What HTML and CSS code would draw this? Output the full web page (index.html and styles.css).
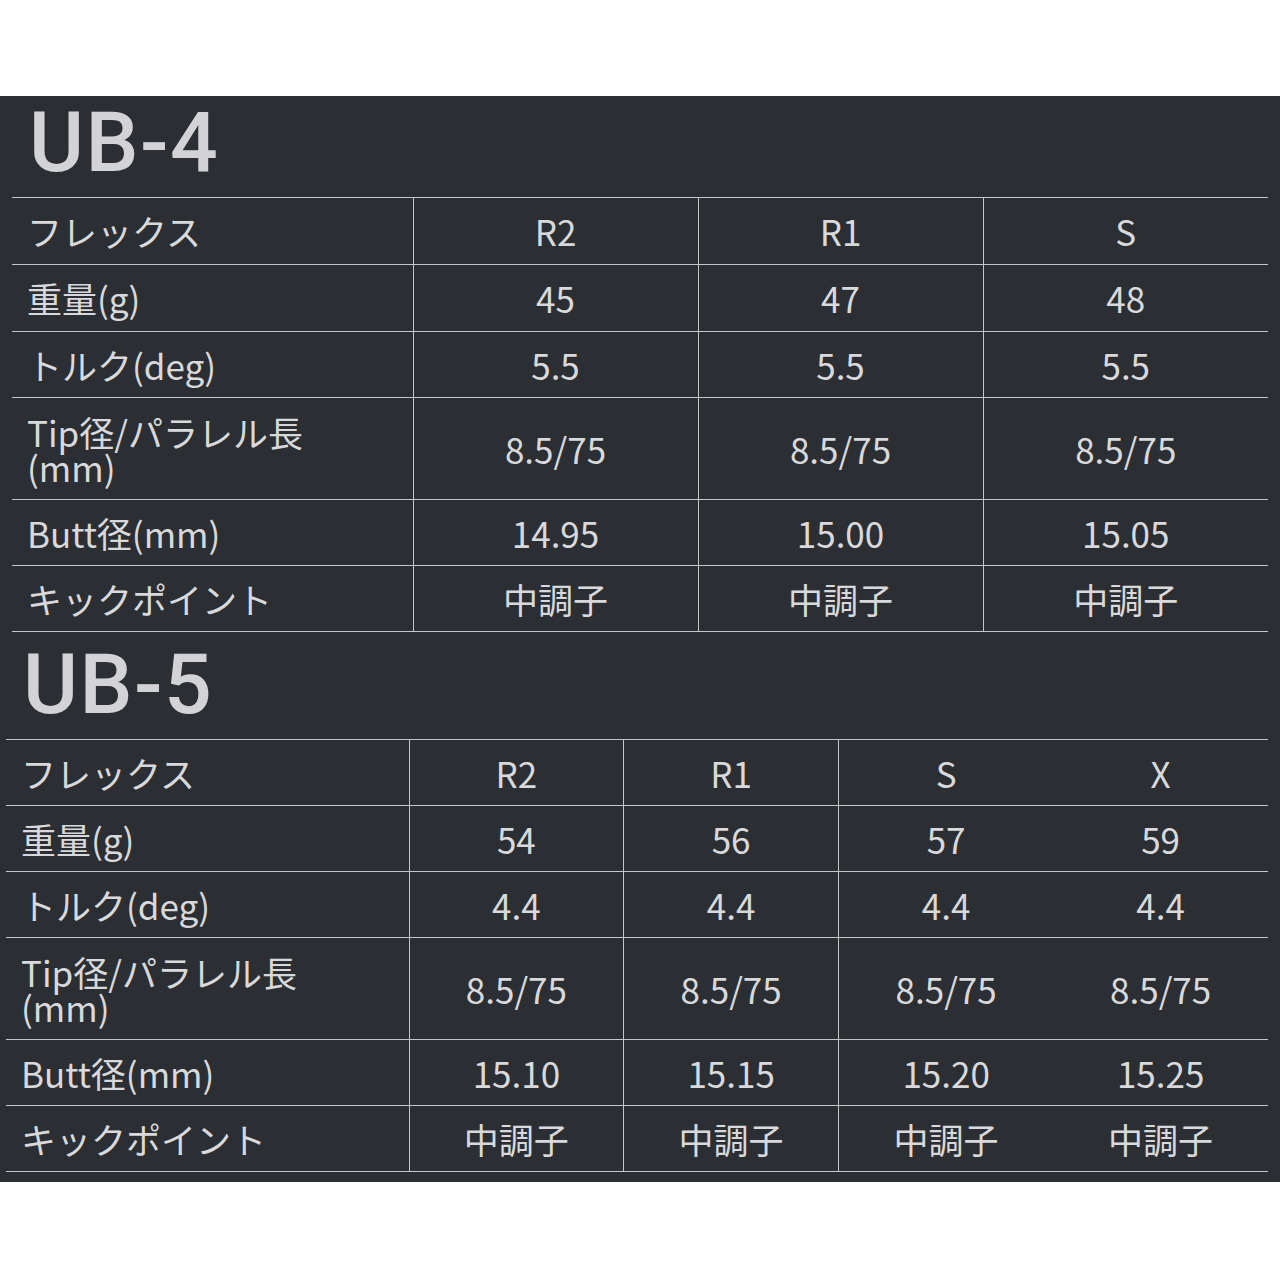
FILE: index.html
```html
<!DOCTYPE html>
<html lang="ja">
<head>
<meta charset="utf-8">
<link rel="stylesheet" href="styles.css">
</head>
<body>
<div class="top-space"></div>
<section class="panel">
  <h2 class="model model-4">UB-4</h2>
  <table class="spec spec-4">
    <colgroup><col class="c-label4"><col><col><col></colgroup>
    <tr class="r67"><th>フレックス</th><td>R2</td><td>R1</td><td>S</td></tr>
    <tr class="r67"><th>重量(g)</th><td>45</td><td>47</td><td>48</td></tr>
    <tr><th>トルク(deg)</th><td>5.5</td><td>5.5</td><td>5.5</td></tr>
    <tr class="tall"><th>Tip径/パラレル長<br>(mm)</th><td>8.5/75</td><td>8.5/75</td><td>8.5/75</td></tr>
    <tr><th>Butt径(mm)</th><td>14.95</td><td>15.00</td><td>15.05</td></tr>
    <tr><th>キックポイント</th><td>中調子</td><td>中調子</td><td>中調子</td></tr>
  </table>
  <h2 class="model model-5">UB-5</h2>
  <table class="spec spec-5">
    <colgroup><col class="c-label5"><col><col><col><col></colgroup>
    <tr><th>フレックス</th><td>R2</td><td>R1</td><td>S</td><td class="nb">X</td></tr>
    <tr><th>重量(g)</th><td>54</td><td>56</td><td>57</td><td class="nb">59</td></tr>
    <tr><th>トルク(deg)</th><td>4.4</td><td>4.4</td><td>4.4</td><td class="nb">4.4</td></tr>
    <tr class="tall"><th>Tip径/パラレル長<br>(mm)</th><td>8.5/75</td><td>8.5/75</td><td>8.5/75</td><td class="nb">8.5/75</td></tr>
    <tr><th>Butt径(mm)</th><td>15.10</td><td>15.15</td><td>15.20</td><td class="nb">15.25</td></tr>
    <tr><th>キックポイント</th><td>中調子</td><td>中調子</td><td>中調子</td><td class="nb">中調子</td></tr>
  </table>
</section>
</body>
</html>
```

FILE: styles.css
```css
html, body {
  margin: 0;
  padding: 0;
  background: #ffffff;
}
body {
  font-family: "Noto Sans CJK JP", "Noto Sans", sans-serif;
  color: #d9d9db;
}
.top-space {
  height: 96px;
}
.panel {
  background: #2b2f33;
  padding: 0 12px 10px 0;
}
.model {
  margin: 0;
  font-family: Roboto, "Noto Sans", sans-serif;
  font-size: 84px;
  font-weight: 500;
  line-height: 1;
  letter-spacing: 1.5px;
  color: #d3d3d7;
  box-sizing: border-box;
}
.model-4 {
  padding: 5px 0 0 29px;
  height: 101px;
}
.model-5 {
  padding: 11px 0 0 23px;
  height: 107px;
}
.spec {
  border-collapse: collapse;
  table-layout: fixed;
  width: calc(100% - 12px);
  margin-left: 12px;
}
.spec-5 {
  width: calc(100% - 6px);
  margin-left: 6px;
}
.c-label4 { width: 401px; }
.c-label5 { width: 403px; }
.spec th, .spec td {
  border-top: 1px solid #c4c6c8;
  border-bottom: 1px solid #c4c6c8;
  height: 65px;
  padding: 0;
  font-size: 35px;
  font-weight: 400;
  line-height: 36px;
}
.spec tr.r67 th, .spec tr.r67 td {
  height: 66px;
}
.spec th {
  text-align: left;
  padding-left: 15px;
}
.spec td {
  text-align: center;
  border-left: 1px solid #c4c6c8;
}
.spec td.nb {
  border-left: none;
}
.spec tr.tall th, .spec tr.tall td {
  height: 101px;
}
.spec tr.tall th {
  line-height: 35px;
}
```
